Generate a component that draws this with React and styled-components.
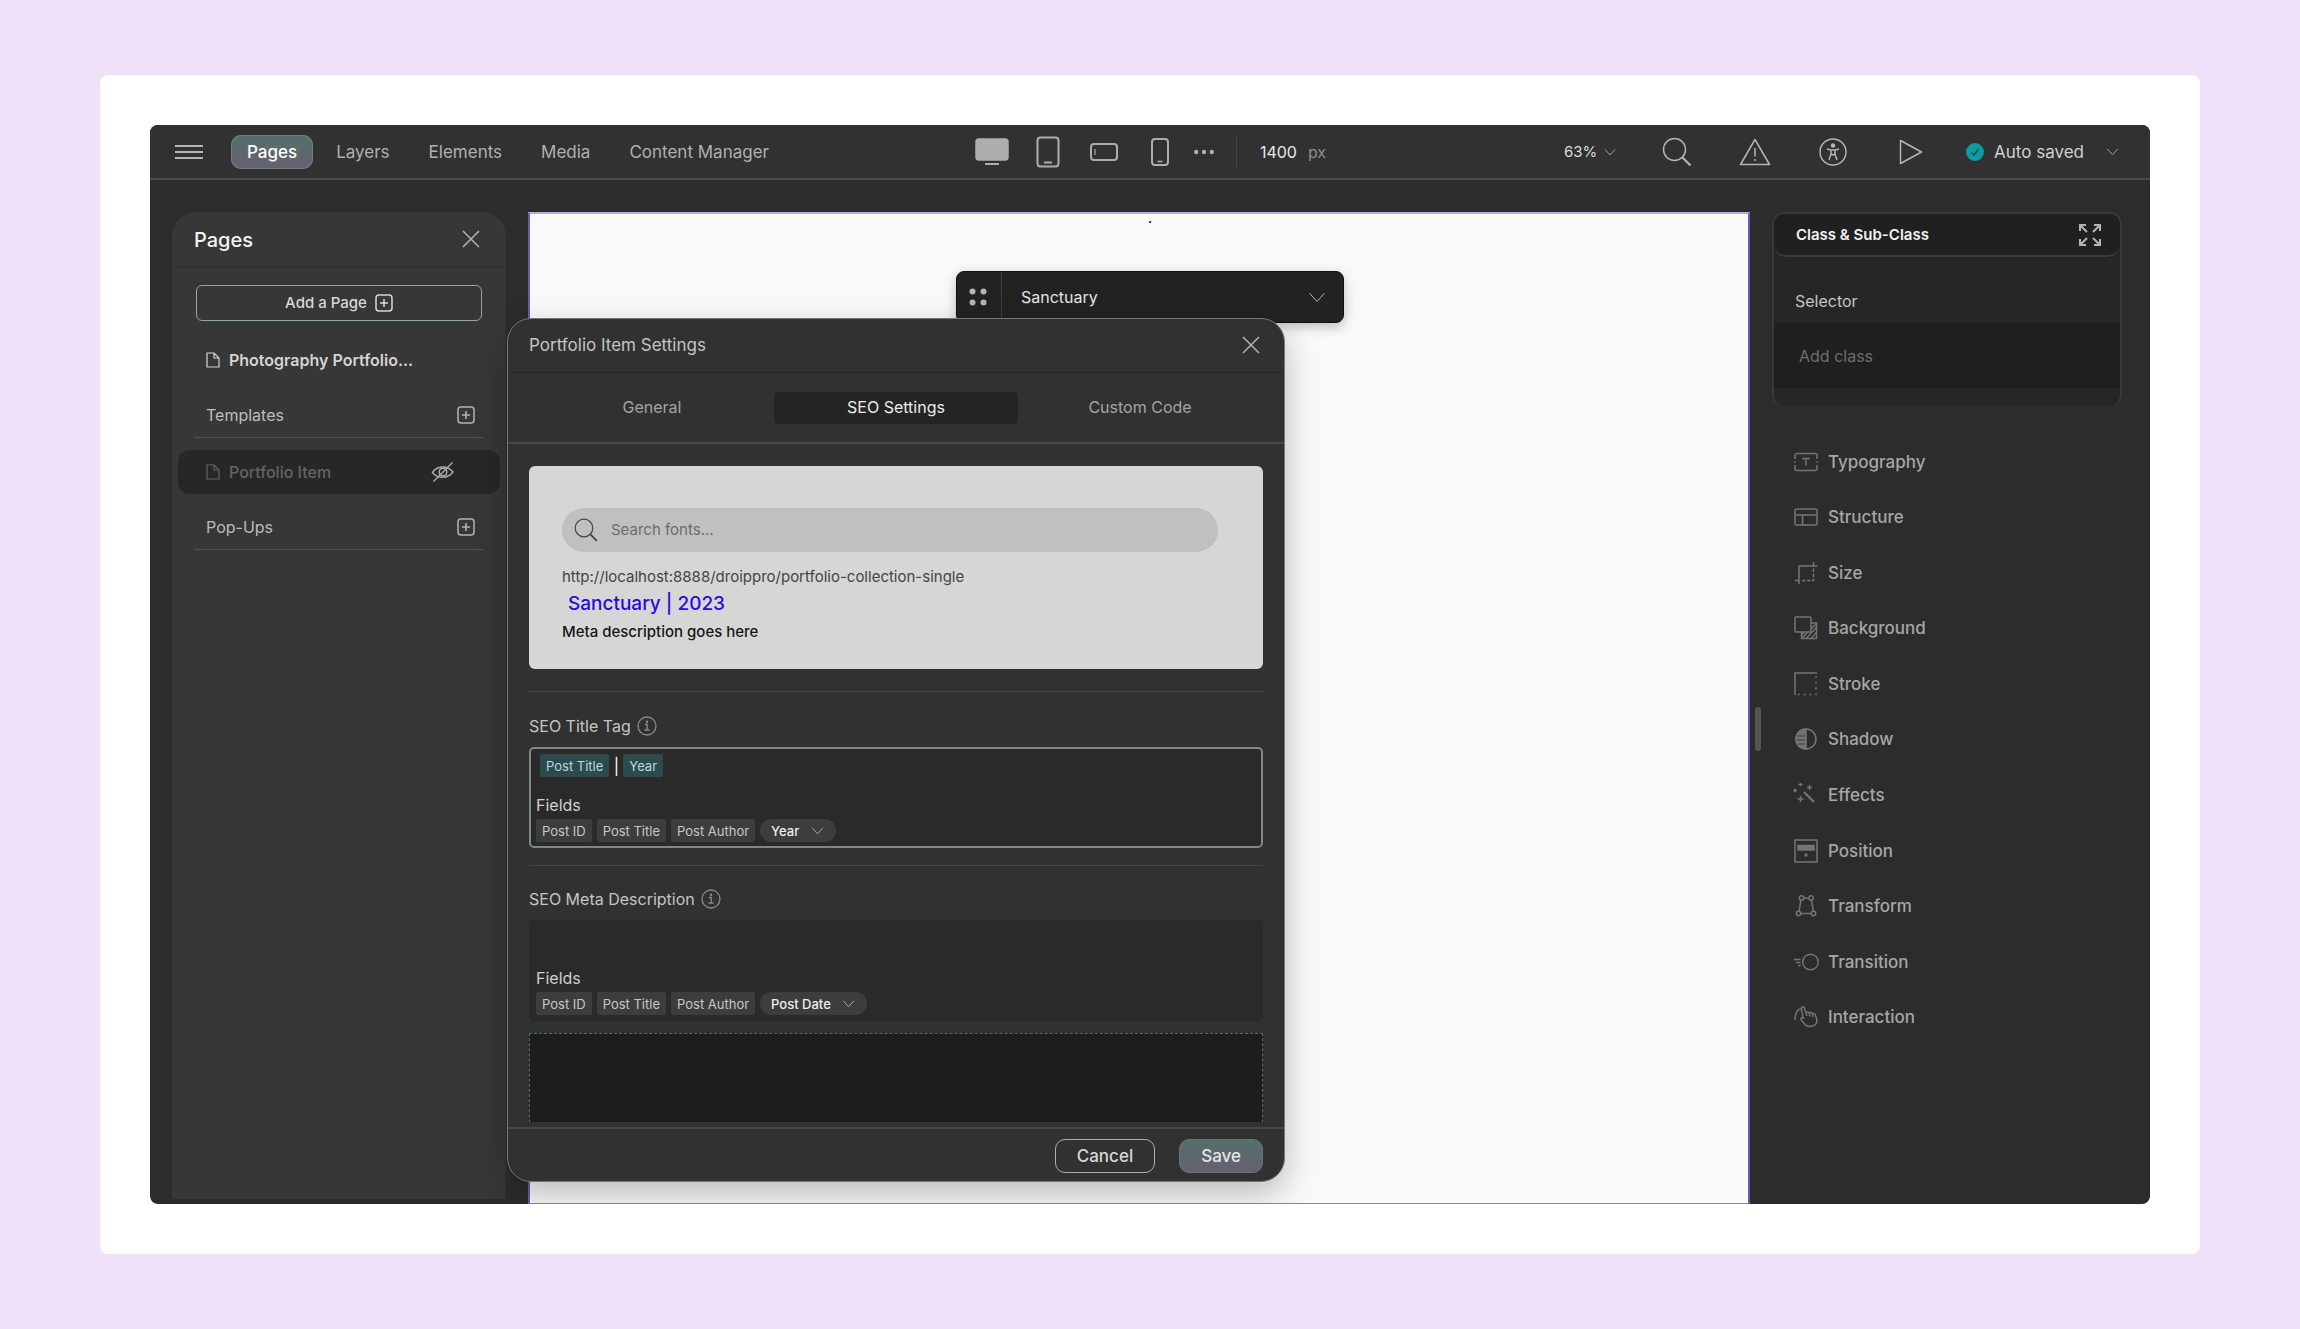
import React, { useState } from "react";
import styled, { createGlobalStyle } from "styled-components";

const navItems = ["Pages", "Layers", "Elements", "Media", "Content Manager"];
const tabs = ["General", "SEO Settings", "Custom Code"];
const fields = ["Post ID", "Post Title", "Post Author"];

const Chevron = ({ size = 12 }) => (
  <Svg width={size} height={size} viewBox="0 0 12 12" $stroke={12 / size}>
    <path d="M1 3.5 6 9l5-5.5" />
  </Svg>
);

const Close = () => (
  <Svg width="18" height="18" viewBox="0 0 18 18">
    <path d="M1 1l16 16M17 1L1 17" />
  </Svg>
);

const Plus = () => (
  <Svg width="18" height="18" viewBox="0 0 18 18">
    <rect x="1" y="1" width="16" height="16" rx="3" />
    <path d="M9 5v8M5 9h8" />
  </Svg>
);

const PageIcon = () => (
  <Svg width="14" height="16" viewBox="0 0 14 16" $stroke={1.2}>
    <path d="M1 1h7l5 5v9H1zM8 1v5h5" />
  </Svg>
);

const Search = ({ size = 30 }) => (
  <Svg width={size} height={size} viewBox="0 0 30 30">
    <circle cx="12.5" cy="12.5" r="11" />
    <path d="M20.500 20.500l8 8" strokeWidth="2.200" />
  </Svg>
);

const Info = () => (
  <Svg width="20" height="20" viewBox="0 0 20 20" $stroke={1.3}>
    <circle cx="10" cy="10" r="9" />
    <path d="M8 8.500h2.200v5.500M7.500 14h5" />
    <circle cx="10" cy="5.700" r=".6" fill="currentColor" />
  </Svg>
);

const styleIcons = {
  Typography: (
    <>
      <path d="M1 9V5.500a2 2 0 0 1 2-2h18a2 2 0 0 1 2 2V9M1 15v3.500a2 2 0 0 0 2 2h18a2 2 0 0 0 2-2V15M1 11.200v1.600M23 11.200v1.600" />
      <path d="M9 9.500V8.500h6v1M12 8.500v7" />
    </>
  ),
  Structure: (
    <>
      <rect x="1" y="4" width="22" height="16" rx="1.5" />
      <path d="M1 10h22M8.500 10v10" />
    </>
  ),
  Size: (
    <>
      <path d="M5 23V5h18.500M19.500 1v4" />
      <path d="M1 19.500h4" />
      <path d="M8 19.500h11.500V5" strokeDasharray="3.500 1.500" />
    </>
  ),
  Background: (
    <>
      <rect x="1" y="1" width="16" height="15" rx="1" />
      <path d="M17 7h5.500v15.500h-15V16" />
      <path d="M8 22l5.500-5.500M12 22.500l10.500-11M17 22.500l5.500-6M17 13l5.500-5.500M8 18.500l2.500-2.500" />
    </>
  ),
  Stroke: (
    <>
      <path d="M1 23V1h22" />
      <path d="M22 4v18.500H4" strokeDasharray="1.800 4" />
    </>
  ),
  Shadow: (
    <>
      <circle cx="12" cy="12" r="10" />
      <path d="M12 2a10 10 0 0 0 0 20z" fill="currentColor" />
      <path d="M3 9h8M2.500 13h8.500M4 17h7" stroke="#2c2c2c" strokeWidth=".8" />
    </>
  ),
  Effects: (
    <>
      <path d="M10 9l10 10" strokeWidth="2.200" />
      <path d="M-1 7.500h4M1 5.500v4M4.500 1.500h4M6.500 0v3M13 4.500h5M15.500 2v5M3.500 16h6M6.500 13v6" strokeWidth="1.500" />
    </>
  ),
  Position: (
    <>
      <rect x="1" y="1" width="22" height="22" />
      <rect x="4" y="6.500" width="16" height="4.500" fill="currentColor" />
      <circle cx="12" cy="16" r="1" fill="currentColor" />
    </>
  ),
  Transform: (
    <>
      <circle cx="7.500" cy="4" r="2.200" />
      <circle cx="17" cy="4" r="2.200" />
      <circle cx="4.500" cy="19.500" r="2.200" />
      <circle cx="19.500" cy="19.500" r="2.200" />
      <path d="M9.700 4h5.100M7 6.200L5 17.300M17.500 6.200l1.800 11.100M6.700 19.500h10.600" />
    </>
  ),
  Transition: (
    <>
      <circle cx="16.500" cy="12" r="7.800" />
      <path d="M0 9.500h6.500M2 12.500h4.500M4 15.500h2.500" />
    </>
  ),
  Interaction: (
    <>
      <path d="M1 15C1 8 4 4 8 3.500" />
      <path d="M9 13L7.500 3.500a1.500 1.500 0 0 1 3-.5l1.500 5c.3-1.500 3-1.500 3.300.3.500-1.300 3-1 3.200.7.800-1 2.700-.4 3 1.200l1.200 4c1 4-2 7-6 7.300-4 .3-6-2-9.500-6.500-1.200-1.700.8-3 2-2z" />
      <path d="M12 8l1 3M15.300 8.500l.9 3M18.500 9.500l.7 2.500" />
    </>
  ),
};

function FieldBox({ active, id, value, option }) {
  return (
    <Box $active={active}>
      <TagRow>
        {active ? (
          <>
            <Tag $teal>Post Title</Tag>
            <TitleInput id={id} defaultValue={value} />
            <Tag $teal>Year</Tag>
          </>
        ) : (
          <MetaInput id={id} rows="1" />
        )}
      </TagRow>
      <FieldsLabel>Fields</FieldsLabel>
      <ChipRow>
        {fields.map((field) => (
          <Tag key={field}>{field}</Tag>
        ))}
        <Pill>
          <select aria-label="More fields">
            <option>{option}</option>
          </select>
          <Chevron size={13} />
        </Pill>
      </ChipRow>
    </Box>
  );
}

function App() {
  const [activeNav, setActiveNav] = useState("Pages");
  const [activeTab, setActiveTab] = useState("SEO Settings");

  return (
    <Page>
      <GlobalStyle />
      <Card>
        <Window>
          <TopBar>
            <NavGroup>
              <IconButton aria-label="Menu">
                <Svg width="28" height="16" viewBox="0 0 28 16" $stroke={2}>
                  <path d="M0 2h28M0 8h28M0 14h28" />
                </Svg>
              </IconButton>
              <Nav>
                {navItems.map((item) => (
                  <NavButton key={item} $active={item === activeNav} onClick={() => setActiveNav(item)}>
                    {item}
                  </NavButton>
                ))}
              </Nav>
            </NavGroup>

            <DeviceGroup>
              <DeviceButton aria-label="Desktop">
                <Svg width="34" height="28" viewBox="0 0 34 28">
                  <rect x="1" y="1" width="32" height="21" rx="3" fill="currentColor" />
                  <path d="M10 26h14" strokeWidth="2" />
                </Svg>
              </DeviceButton>
              <DeviceButton aria-label="Tablet">
                <Svg width="24" height="32" viewBox="0 0 24 32" $stroke={2}>
                  <rect x="1.500" y="1.500" width="21" height="29" rx="3" />
                  <path d="M8 26.500h8" />
                </Svg>
              </DeviceButton>
              <DeviceButton aria-label="Phone landscape">
                <Svg width="28" height="18" viewBox="0 0 28 18" $stroke={2}>
                  <rect x="1" y="1" width="26" height="16" rx="3" />
                  <path d="M5 6v6" strokeWidth="1.200" />
                </Svg>
              </DeviceButton>
              <DeviceButton aria-label="Phone">
                <Svg width="18" height="28" viewBox="0 0 18 28" $stroke={2}>
                  <rect x="1" y="1" width="16" height="26" rx="3" />
                  <path d="M6.500 23.500h5" strokeWidth="1.500" />
                </Svg>
              </DeviceButton>
              <MoreButton aria-label="More breakpoints">
                <Svg width="20" height="6" viewBox="0 0 20 6">
                  <g fill="currentColor" stroke="none">
                    <circle cx="2.200" cy="3" r="2.200" />
                    <circle cx="10" cy="3" r="2.200" />
                    <circle cx="17.800" cy="3" r="2.200" />
                  </g>
                </Svg>
              </MoreButton>
              <WidthField>
                <input aria-label="Canvas width" defaultValue="1400" />
                px
              </WidthField>
            </DeviceGroup>

            <ActionGroup>
              <Zoom>
                <select aria-label="Zoom">
                  <option>63%</option>
                </select>
                <Chevron />
              </Zoom>
              <ActionButton aria-label="Search">
                <Search />
              </ActionButton>
              <ActionButton aria-label="Warnings">
                <Svg width="32" height="28" viewBox="0 0 32 28">
                  <path d="M16 1.500L30.500 26.500h-29z" strokeLinejoin="round" />
                  <path d="M16 10v8.500M16 21v2" />
                </Svg>
              </ActionButton>
              <ActionButton aria-label="Accessibility">
                <Svg width="28" height="28" viewBox="0 0 28 28">
                  <circle cx="14" cy="14" r="13" />
                  <circle cx="14" cy="7.500" r="1.500" fill="currentColor" />
                  <path d="M8 11l4 1h4l4-1M12 12v4l-2 6M16 12v4l2 6M12 12h4v4l-2 1-2-1z" />
                </Svg>
              </ActionButton>
              <ActionButton aria-label="Preview">
                <Svg width="24" height="26" viewBox="0 0 24 26">
                  <path d="M1.500 1.500L22.500 13 1.500 24.500z" strokeLinejoin="round" />
                </Svg>
              </ActionButton>
              <Saved>
                <svg width="18" height="18" viewBox="0 0 18 18" fill="none">
                  <circle cx="9" cy="9" r="9" fill="#0b9da3" />
                  <path d="M5.500 9.500l2.500 2.500 4.500-6" stroke="#2c4a4c" strokeWidth="1.500" />
                </svg>
                <span>Auto saved</span>
                <Chevron size={13} />
              </Saved>
            </ActionGroup>
          </TopBar>

          <Workspace>
            <PagesPanel>
              <PanelHeader>
                <h2>Pages</h2>
                <IconButton aria-label="Close pages">
                  <Close />
                </IconButton>
              </PanelHeader>
              <AddButton>
                Add a Page <Plus />
              </AddButton>
              <PageLink href="#home">
                <PageIcon />
                Photography Portfolio...
              </PageLink>
              <GroupRow>
                Templates
                <IconButton aria-label="Add template">
                  <Plus />
                </IconButton>
              </GroupRow>
              <PageLink href="#portfolio-item" $selected>
                <PageIcon />
                Portfolio Item
                <Svg width="24" height="20" viewBox="0 0 24 20">
                  <path d="M1.500 10.500C6 3.500 16 3 22 10 17 16.500 7 17.500 1.500 10.500z" />
                  <circle cx="12" cy="10" r="3.800" />
                  <path d="M2.500 19.500L21.500 .5" />
                </Svg>
              </PageLink>
              <GroupRow>
                Pop-Ups
                <IconButton aria-label="Add pop-up">
                  <Plus />
                </IconButton>
              </GroupRow>
            </PagesPanel>

            <Canvas>.</Canvas>

            <StylePanel>
              <ClassCard>
                <ClassHeader>
                  <h3>Class &amp; Sub-Class</h3>
                  <IconButton aria-label="Expand">
                    <Svg width="22" height="22" viewBox="0 0 22 22" $stroke={2}>
                      <path d="M1 7V1h6M1 1l7 7M15 1h6v6M21 1l-7 7M1 15v6h6M1 21l7-7M21 15v6h-6M21 21l-7-7" />
                    </Svg>
                  </IconButton>
                </ClassHeader>
                <label htmlFor="selector">Selector</label>
                <ClassInput id="selector" placeholder="Add class" />
              </ClassCard>
              <StyleList>
                {Object.entries(styleIcons).map(([name, icon]) => (
                  <StyleButton key={name}>
                    <Svg width="24" height="24" viewBox="0 0 24 24">
                      {icon}
                    </Svg>
                    {name}
                  </StyleButton>
                ))}
              </StyleList>
              <ScrollThumb />
            </StylePanel>
          </Workspace>

          <FloatingBar>
            <Grip>
              <Svg width="18" height="18" viewBox="0 0 18 18">
                <g fill="currentColor" stroke="none">
                  <circle cx="3.500" cy="3.500" r="3" />
                  <circle cx="14.500" cy="3.500" r="3" />
                  <circle cx="3.500" cy="14.500" r="3" />
                  <circle cx="14.500" cy="14.500" r="3" />
                </g>
              </Svg>
            </Grip>
            <FloatingSelect>
              <select aria-label="Preview post">
                <option>Sanctuary</option>
              </select>
              <Chevron size={18} />
            </FloatingSelect>
          </FloatingBar>

          <Modal role="dialog" aria-label="Portfolio Item Settings">
            <ModalHeader>
              Portfolio Item Settings
              <IconButton aria-label="Close settings">
                <Close />
              </IconButton>
            </ModalHeader>
            <TabBar>
              {tabs.map((tab) => (
                <Tab key={tab} $active={tab === activeTab} onClick={() => setActiveTab(tab)}>
                  {tab}
                </Tab>
              ))}
            </TabBar>
            <ModalBody>
              <Preview>
                <SearchBox>
                  <Search size={24} />
                  <input aria-label="Search" placeholder="Search fonts..." />
                </SearchBox>
                <PreviewUrl>http://localhost:8888/droippro/portfolio-collection-single</PreviewUrl>
                <PreviewTitle href="#preview">Sanctuary | 2023</PreviewTitle>
                <PreviewText>Meta description goes here</PreviewText>
              </Preview>
              <Section>
                <SectionLabel htmlFor="seo-title">
                  SEO Title Tag <Info />
                </SectionLabel>
                <FieldBox active id="seo-title" value="|" option="Year" />
              </Section>
              <Section>
                <SectionLabel htmlFor="seo-meta">
                  SEO Meta Description <Info />
                </SectionLabel>
                <FieldBox id="seo-meta" option="Post Date" />
              </Section>
              <ImageDrop />
            </ModalBody>
            <ModalFooter>
              <Cancel>Cancel</Cancel>
              <Save>Save</Save>
            </ModalFooter>
          </Modal>
        </Window>
      </Card>
    </Page>
  );
}

const GlobalStyle = createGlobalStyle`
  *{
    box-sizing:border-box;
  }
  body{
    margin:0;
    background:#eee1f9;
    font-family:Inter, "Liberation Sans", sans-serif;
    font-size:16px;
    line-height:24px;
    color:#c4c4c4;
  }
  button, input, select, textarea{
    font:inherit;
    color:inherit;
    background:none;
    border:0;
    padding:0;
    margin:0;
    border-radius:0;
    outline:none;
  }
  select{
    appearance:none;
    position:relative;
    z-index:1;
  }
  h2, h3, p{
    margin:0;
  }
  a{
    text-decoration:none;
  }
`;
const Svg = styled.svg`
  display:block;
  flex:none;
  overflow:visible;
  fill:none;
  stroke:currentColor;
  stroke-width:${(p) => p.$stroke || 1.5};
`;
const Page = styled.div`
  min-height:100vh;
  padding:75px 100px;
  display:flex;
`;
const Card = styled.div`
  flex:1;
  display:flex;
  padding:50px;
  background:#fff;
  border-radius:8px;
`;
const Window = styled.div`
  position:relative;
  flex:1;
  min-width:0;
  display:flex;
  flex-direction:column;
  background:#2c2c2c;
  border-radius:8px;
  overflow:hidden;
`;
const TopBar = styled.header`
  display:grid;
  grid-template-columns:1fr auto 1fr;
  align-items:center;
  height:55px;
  padding:0 31px 0 25px;
  background:#313131;
  border-bottom:2px solid #4a4a4a;
`;
const IconButton = styled.button`
  display:flex;
  color:#b4b4b4;
`;
const NavGroup = styled.div`
  display:flex;
  align-items:center;
  gap:28px;
`;
const Nav = styled.nav`
  display:flex;
  gap:7px;
`;
const NavButton = styled.button`
  height:34px;
  padding:0 16px;
  border-radius:10px;
  font-size:17px;
  white-space:nowrap;
  font-weight:${(p) => (p.$active ? 500 : 400)};
  color:${(p) => (p.$active ? "#fff" : "#b0b0b0")};
  background:${(p) => (p.$active ? "linear-gradient(#536f6c, #67606f)" : "none")};
  box-shadow:${(p) => (p.$active ? "inset 0 0 0 1px #6f7f80" : "none")};
`;
const DeviceGroup = styled.div`
  display:flex;
  align-items:center;
  padding-right:4px;
`;
const DeviceButton = styled.button`
  width:56px;
  height:34px;
  display:flex;
  align-items:center;
  justify-content:center;
  color:#aeaeae;
`;
const MoreButton = styled(DeviceButton)`
  width:32px;
`;
const WidthField = styled.label`
  display:flex;
  align-items:center;
  height:34px;
  margin-left:16px;
  padding-left:23px;
  border-left:1px solid #444;
  color:#8c8c8c;
  input{
    width:48px;
    color:#e8e8e8;
  }
`;
const ActionGroup = styled.div`
  display:flex;
  align-items:center;
  justify-content:flex-end;
`;
const Zoom = styled.span`
  display:flex;
  align-items:center;
  gap:6px;
  margin-right:22px;
  font-size:15px;
  color:#a0a0a0;
  select{
    color:#dcdcdc;
  }
`;
const ActionButton = styled.button`
  width:78px;
  height:34px;
  display:flex;
  align-items:center;
  justify-content:center;
  color:#b4b4b4;
`;
const Saved = styled.button`
  display:flex;
  align-items:center;
  margin-left:16px;
  color:#a0a0a0;
  font-size:17px;
  span{
    margin:0 22px 0 10px;
    color:#d0d0d0;
    white-space:nowrap;
  }
`;
const Workspace = styled.main`
  flex:1;
  display:grid;
  grid-template-columns:334px 1fr 350px;
  column-gap:22px;
  padding:32px 28px 0 22px;
`;
const PagesPanel = styled.aside`
  margin-bottom:5px;
  background:#373737;
  border-radius:24px 24px 0 0;
`;
const PanelHeader = styled.div`
  display:flex;
  align-items:center;
  justify-content:space-between;
  height:56px;
  padding:0 26px 0 22px;
  border-bottom:2px solid #313131;
  h2{
    padding-top:2px;
    font-size:20px;
    font-weight:500;
    color:#f4f4f4;
  }
`;
const AddButton = styled.button`
  display:flex;
  align-items:center;
  justify-content:center;
  gap:8px;
  width:286px;
  height:36px;
  margin:17px 24px;
  border:1px solid #93a7a4;
  border-radius:6px;
  font-size:15px;
  font-weight:500;
  color:#d8d8d8;
`;
const PageLink = styled.a`
  display:flex;
  align-items:center;
  gap:9px;
  height:44px;
  margin:0 6px;
  padding:0 45px 0 28px;
  border-radius:12px;
  font-weight:${(p) => (p.$selected ? 500 : 600)};
  color:${(p) => (p.$selected ? "#646464" : "#d4d4d4")};
  background:${(p) => (p.$selected ? "#272727" : "none")};
  svg:nth-of-type(2){
    margin-left:auto;
    color:#a8a8a8;
  }
`;
const GroupRow = styled.div`
  display:flex;
  align-items:center;
  justify-content:space-between;
  height:44px;
  margin:12px 22px;
  padding:0 9px 2px 12px;
  border-bottom:1px solid #505050;
  color:#bdbdbd;
`;
const Canvas = styled.section`
  padding-left:22px;
  border:2px solid #6a5bb0;
  border-top-color:#b5aadb;
  border-bottom:1px solid #8a8a8a;
  background:#f9f9f9;
  color:#111;
  line-height:6px;
  text-align:center;
`;
const StylePanel = styled.aside`
  position:relative;
  display:flex;
  flex-direction:column;
`;
const ClassCard = styled.div`
  height:194px;
  border:2px solid #383838;
  border-bottom:0;
  border-radius:12px;
  background:#262626;
  overflow:hidden;
  label{
    display:block;
    padding:32px 21px 9px;
    color:#c4c4c4;
  }
`;
const ClassHeader = styled.div`
  display:flex;
  align-items:center;
  justify-content:space-between;
  height:43px;
  padding:0 19px 0 22px;
  border-bottom:2px solid #3a3a3a;
  border-radius:0 0 12px 12px;
  background:#202020;
  h3{
    font-size:15px;
    font-weight:600;
    color:#f0f0f0;
  }
`;
const ClassInput = styled.input`
  display:block;
  width:100%;
  height:66px;
  padding:2px 25px 0;
  background:#1f1f1f;
  &::placeholder{
    color:#6e6e6e;
  }
`;
const StyleList = styled.div`
  flex:1;
  display:grid;
  grid-auto-rows:1fr;
  padding:28px 22px 159px;
`;
const StyleButton = styled.button`
  display:flex;
  align-items:center;
  gap:10px;
  font-size:17px;
  font-weight:500;
  color:#a6a6a6;
  svg{
    color:#747474;
  }
`;
const ScrollThumb = styled.span`
  position:absolute;
  left:-17px;
  top:495px;
  width:6px;
  height:44px;
  border-radius:3px;
  background:#545454;
`;
const FloatingBar = styled.div`
  position:absolute;
  top:146px;
  left:50%;
  transform:translateX(-50%);
  width:388px;
  height:52px;
  display:flex;
  align-items:stretch;
  background:#222;
  border:1px solid #111;
  border-radius:8px;
  box-shadow:0 4px 12px rgba(0, 0, 0, .25);
  color:#b4b4b4;
`;
const Grip = styled.span`
  display:flex;
  align-items:center;
  padding:0 14px 0 12px;
  border-right:1px solid #3c3c3c;
`;
const FloatingSelect = styled.span`
  flex:1;
  display:flex;
  align-items:center;
  justify-content:space-between;
  padding:0 17px 0 19px;
  select{
    color:#e4e4e4;
  }
`;
const Modal = styled.div`
  position:absolute;
  z-index:2;
  top:193px;
  bottom:22px;
  left:357px;
  width:778px;
  display:flex;
  flex-direction:column;
  background:#313131;
  border:1px solid #777;
  border-radius:24px;
  box-shadow:0 12px 32px rgba(0, 0, 0, .25);
`;
const ModalHeader = styled.div`
  display:flex;
  align-items:center;
  justify-content:space-between;
  height:54px;
  padding:0 24px 2px 21px;
  border-bottom:1px solid #272727;
  font-size:17px;
`;
const TabBar = styled.div`
  display:grid;
  grid-template-columns:1fr 1fr 1fr;
  padding:19px 22px 18px;
  border-bottom:2px solid #484848;
`;
const Tab = styled.button`
  height:32px;
  padding-bottom:2px;
  border-radius:4px;
  color:${(p) => (p.$active ? "#ececec" : "#a4a4a4")};
  background:${(p) => (p.$active ? "#242424" : "none")};
`;
const ModalBody = styled.div`
  flex:1;
  min-height:0;
  overflow:hidden;
  margin-bottom:5px;
  padding:22px 21px 0;
`;
const Preview = styled.div`
  height:203px;
  padding:42px 33px 0;
  border-radius:6px;
  background:#d6d6d6;
  display:flex;
  flex-direction:column;
  align-items:flex-start;
  font-size:15px;
`;
const SearchBox = styled.div`
  display:flex;
  align-items:center;
  gap:13px;
  width:656px;
  height:44px;
  margin-bottom:13px;
  padding:0 12px;
  border-radius:22px;
  background:#c0c0c0;
  color:#444;
  input{
    flex:1;
  }
  input::placeholder{
    color:#6c6c6c;
  }
`;
const PreviewUrl = styled.p`
  color:#444;
`;
const PreviewTitle = styled.a`
  padding:3px 6px 4px;
  font-size:19px;
  font-weight:500;
  color:#260be0;
`;
const PreviewText = styled.p`
  color:#161616;
  font-weight:500;
`;
const Section = styled.div`
  margin-top:22px;
  padding-top:22px;
  border-top:1px solid #464646;
  & + &{
    margin-top:17px;
    padding-top:21px;
  }
`;
const SectionLabel = styled.label`
  display:flex;
  align-items:center;
  gap:6px;
  margin-bottom:9px;
  svg{
    color:#8a8a8a;
  }
`;
const Box = styled.div`
  padding:5px 5px 4px;
  border:2px solid ${(p) => (p.$active ? "#7f8886" : "#2a2a2a")};
  border-radius:5px;
  background:#2a2a2a;
`;
const TagRow = styled.div`
  display:flex;
  align-items:center;
  gap:3px;
  height:23px;
  padding:0 4px;
`;
const Tag = styled.button`
  height:23px;
  padding:0 6px;
  border-radius:2px;
  font-size:13px;
  line-height:20px;
  color:${(p) => (p.$teal ? "#b4dcdc" : "#c8c8c8")};
  background:${(p) => (p.$teal ? "#2d4a4c" : "#3d3d3d")};
`;
const TitleInput = styled.input`
  width:8px;
  text-align:center;
  color:#fff;
`;
const MetaInput = styled.textarea`
  flex:1;
  height:23px;
  resize:none;
`;
const FieldsLabel = styled.p`
  margin-top:18px;
  line-height:20px;
  color:#d0d0d0;
`;
const ChipRow = styled.div`
  display:flex;
  gap:5px;
  margin-top:4px;
`;
const Pill = styled.span`
  display:flex;
  align-items:center;
  gap:11px;
  height:23px;
  padding:0 12px 0 11px;
  border-radius:12px;
  background:#3d3d3d;
  font-size:13px;
  font-weight:500;
  color:#a8a8a8;
  select{
    color:#ececec;
  }
`;
const ImageDrop = styled.div`
  height:120px;
  margin-top:12px;
  border:1px dashed #4a7368;
  background:#1d1d1d;
`;
const ModalFooter = styled.div`
  display:flex;
  justify-content:flex-end;
  gap:24px;
  padding:10px 21px 8px;
  border-top:2px solid #464646;
`;
const Cancel = styled.button`
  height:34px;
  padding:0 21px;
  border:1px solid #a5b3b1;
  border-radius:10px;
  font-size:17px;
  font-weight:500;
  color:#d8d8d8;
`;
const Save = styled(Cancel)`
  border-color:#66757a;
  color:#e4e4e4;
  background:linear-gradient(#536f6c, #67606f);
`;
export default App;
